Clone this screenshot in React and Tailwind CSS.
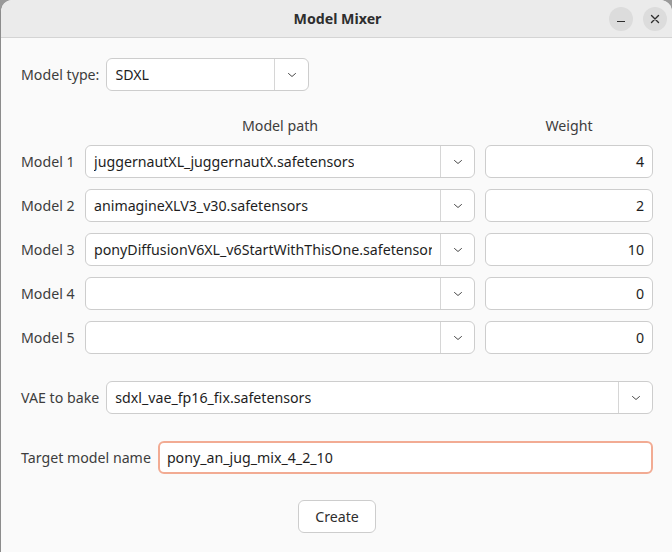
import React, { useState } from 'react';

function Chevron() {
    return (
        <svg width="12" height="12" viewBox="0 0 12 12" fill="none" stroke="#4a4a4a" strokeWidth="1" strokeLinecap="round">
            <path d="M2.5 4.5 L6 7.5 L9.5 4.5" />
        </svg>
    );
}

function Combo({ value, className = '' }) {
    return (
        <div className={`h-[33px] flex bg-white border border-[#cdcdcd] rounded-[6px] ${className}`}>
            <div className="flex-1 min-w-0 flex items-center pl-2 pr-[8px] overflow-hidden whitespace-nowrap text-[#1e1e1e]">
                <span className="overflow-hidden">{value}</span>
            </div>
            <div className="w-[34px] border-l border-[#d6d6d6] flex items-center justify-center">
                <Chevron />
            </div>
        </div>
    );
}

function App() {
    const [nombre, setNombre] = useState('pony_an_jug_mix_4_2_10');

    const modelos = [
        { label: 'Model 1', path: 'juggernautXL_juggernautX.safetensors', peso: '4' },
        { label: 'Model 2', path: 'animagineXLV3_v30.safetensors', peso: '2' },
        { label: 'Model 3', path: 'ponyDiffusionV6XL_v6StartWithThisOne.safetensors', peso: '10' },
        { label: 'Model 4', path: '', peso: '0' },
        { label: 'Model 5', path: '', peso: '0' },
    ];

    return (
        <div className="w-[672px] h-[552px] bg-[#9a9a9a] font-['Noto_Sans',sans-serif] text-[14.2px] text-[#3d3d3d]">
            <div className="w-full h-full bg-[#fafafa] rounded-t-[12px] border-l border-[#8c8c8c] flex flex-col overflow-hidden">
                {/* Barra de titulo */}
                <div className="h-[38px] shrink-0 bg-[#ebebeb] border-b border-[#d4d4d4] flex items-center relative">
                    <div className="flex-1 text-center font-bold text-[#2e2e2e] pl-[2px]">Model Mixer</div>
                    <div className="absolute right-[5px] top-[7px] flex gap-[10px]">
                        <div className="w-[24px] h-[24px] rounded-full bg-[#dcdcdc] flex items-center justify-center">
                            <div className="w-[8px] h-[1.5px] bg-[#2e2e2e] mt-[5px]" />
                        </div>
                        <div className="w-[24px] h-[24px] rounded-full bg-[#dcdcdc] flex items-center justify-center">
                            <svg width="10" height="10" viewBox="0 0 10 10" stroke="#2e2e2e" strokeWidth="1.4" strokeLinecap="round">
                                <path d="M1.5 1.5 L8.5 8.5 M8.5 1.5 L1.5 8.5" />
                            </svg>
                        </div>
                    </div>
                </div>

                <div className="pl-[20px] pr-[19px] pt-[20px] flex flex-col">
                    {/* Tipo de modelo */}
                    <div className="flex items-center gap-[7px]">
                        <span>Model type:</span>
                        <Combo value="SDXL" className="w-[203px]" />
                    </div>

                    {/* Encabezados */}
                    <div className="flex mt-[25px] h-[20px] items-center">
                        <div className="w-[64px]" />
                        <div className="w-[390px] text-center">Model path</div>
                        <div className="w-[10px]" />
                        <div className="w-[168px] text-center">Weight</div>
                    </div>

                    <div className="flex flex-col gap-[11px] mt-[9px]">
                        {modelos.map(m => (
                            <div key={m.label} className="flex items-center">
                                <div className="w-[64px]">{m.label}</div>
                                <Combo value={m.path} className="w-[390px]" />
                                <div className="w-[10px]" />
                                <div className="w-[168px] h-[33px] bg-white border border-[#cdcdcd] rounded-[6px] flex items-center justify-end pr-[8px] text-[#1e1e1e]">
                                    {m.peso}
                                </div>
                            </div>
                        ))}
                    </div>

                    {/* VAE */}
                    <div className="flex items-center gap-[7px] mt-[27px]">
                        <span>VAE to bake</span>
                        <Combo value="sdxl_vae_fp16_fix.safetensors" className="flex-1" />
                    </div>

                    {/* Nombre destino */}
                    <div className="flex items-center gap-[7px] mt-[27px]">
                        <span>Target model name</span>
                        <input
                            value={nombre}
                            onChange={e => setNombre(e.target.value)}
                            className="flex-1 h-[33px] bg-white border-2 border-[#f2ab93] rounded-[6px] px-[7px] text-[#1e1e1e] outline-none"
                        />
                    </div>

                    <div className="flex justify-center mt-[26px]">
                        <button className="w-[78px] h-[33px] bg-white border border-[#cdcdcd] rounded-[6px] text-[#2e2e2e]">
                            Create
                        </button>
                    </div>
                </div>
            </div>
        </div>
    );
}

export default App;
